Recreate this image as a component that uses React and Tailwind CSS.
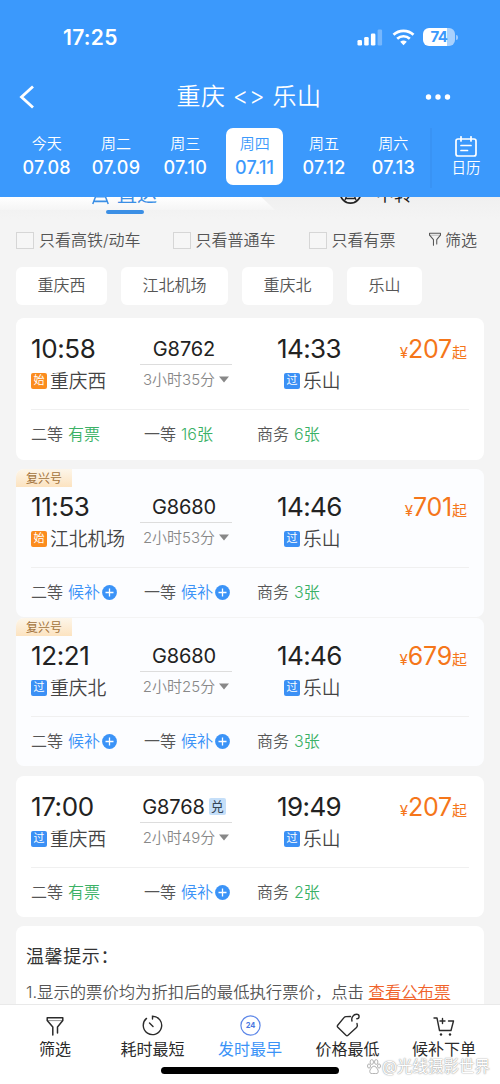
import React from 'react';

const dates = [
  ['今天', '07.08'],
  ['周二', '07.09'],
  ['周三', '07.10'],
  ['周四', '07.11'],
  ['周五', '07.12'],
  ['周六', '07.13'],
];

const trains = [
  { dep: '10:58', arr: '14:33', no: 'G8762', time: '3小时35分', from: '重庆西', kind: '始', price: '207', seats: ['有票', '16张', '6张'] },
  { dep: '11:53', arr: '14:46', no: 'G8680', time: '2小时53分', from: '江北机场', kind: '始', price: '701', seats: ['候补', '候补', '3张'], fuxing: true },
  { dep: '12:21', arr: '14:46', no: 'G8680', time: '2小时25分', from: '重庆北', kind: '过', price: '679', seats: ['候补', '候补', '3张'], fuxing: true },
  { dep: '17:00', arr: '19:49', no: 'G8768', time: '2小时49分', from: '重庆西', kind: '过', price: '207', seats: ['有票', '候补', '2张'], swap: true },
];

function Funnel({ className }) {
  return (
    <svg viewBox="0 0 20 20" className={className} fill="none" stroke="currentColor" strokeWidth="1.5" strokeLinejoin="round" strokeLinecap="round">
      <path d="M7.800 19V11L2.200 4.500V1.700H17.800V4.500L12.500 11V17" />
      <path d="M2.500 4.600H17.500" strokeWidth="0.5" />
    </svg>
  );
}

function Status() {
  return (
    <div className="flex h-[74px] items-center pl-[63px] pr-[42px] text-white">
      <span className="mt-[2px] text-[21px] leading-[24px] font-semibold tracking-[0.300px]">17:25</span>
      <div className="ml-auto flex items-center">
        <svg width="26" height="17" viewBox="0 0 26 17" fill="currentColor">
          <rect x="0.500" y="11" width="4.500" height="5.500" rx="1.300" />
          <rect x="7.200" y="8" width="4.500" height="8.500" rx="1.300" />
          <rect x="13.900" y="4.500" width="4.500" height="12" rx="1.300" />
          <rect x="20.600" y="0.500" width="4.500" height="16" rx="1.300" opacity="0.300" />
        </svg>
        <svg className="ml-[9px]" width="23" height="17" viewBox="0 0 23 17" fill="none" stroke="currentColor" strokeWidth="2.700">
          <path d="M1.500 5.800C7 .6 16 .6 21.500 5.800" />
          <path d="M5.200 9.700C8.800 6.400 14.200 6.400 17.800 9.700" />
          <path d="M8.200 12.800Q11.500 10 14.800 12.800L11.500 16.200Z" fill="currentColor" stroke="none" />
        </svg>
        <div className="ml-[8px] flex h-[18px] w-[32px] items-center justify-center rounded-[6px] bg-linear-to-r from-white from-75% to-[#a9d1fd] to-75%">
          <span className="text-[15px] leading-[18px] font-bold tracking-[-0.5px] text-[#3b99fc]">74</span>
        </div>
        <span className="ml-[1px] h-[5px] w-[2px] rounded-r-full bg-[#9dcbfd]" />
      </div>
    </div>
  );
}

function Header() {
  return (
    <header className="h-[197px] shrink-0 bg-[#3b99fc] text-white">
      <Status />
      <div className="flex h-[45px] items-center justify-between pl-[19px] pr-[49px]">
        <svg width="16" height="24" viewBox="0 0 16 24" fill="none" stroke="currentColor" strokeWidth="2.800">
          <path d="M14 1.500L2.500 12L14 22.500" />
        </svg>
        <h1 className="mt-px ml-[38px] flex h-[30px] items-center text-[24px] leading-[30px] font-[350] whitespace-nowrap tracking-[0.500px]">
          重庆 &lt;&gt; 乐山
        </h1>
        <svg width="26" height="8" viewBox="0 0 26 8" fill="currentColor">
          <circle cx="3.500" cy="4" r="2.700" />
          <circle cx="13" cy="4" r="2.700" />
          <circle cx="22.500" cy="4" r="2.700" />
        </svg>
      </div>
      <div className="flex pt-[9px]">
        <div className="ml-[12px] grid w-[416px] grid-cols-6">
          {dates.map(([day, date], i) => (
            <div key={date} className={i === 3 ? 'mx-auto h-[57px] w-[57px] rounded-[7px] bg-white text-[#3b99fc]' : 'mx-auto h-[57px] w-[57px]'}>
              <div className="h-[30px] pt-[6px] text-center text-[15px] leading-[20px] font-[350]">{day}</div>
              <div className="-mx-2 text-center text-[18px] leading-[20px] font-medium tracking-[0.250px]">{date}</div>
            </div>
          ))}
        </div>
        <div className="ml-[2px] flex h-[60px] grow flex-col items-center border-l-2 border-[#3993f4] pt-[8px]">
          <svg width="22" height="21" viewBox="0 0 22 21" fill="none" stroke="currentColor" strokeWidth="1.700" strokeLinecap="round">
            <rect x="1" y="3" width="20" height="17" rx="2" />
            <path d="M6 .8V5M16 .8V5M6 9.500H16M6 14.500H12.500" />
          </svg>
          <span className="mt-[1px] text-[14.500px] leading-[20px] font-[350]">日历</span>
        </div>
      </div>
    </header>
  );
}

function ModeTabs() {
  return (
    <div className="relative flex h-[22px] shrink-0 overflow-hidden bg-linear-to-b from-[#f0f0f0] to-[#f4f4f4]">
      <div className="h-[13px] w-[275px] bg-linear-to-b from-white to-[#f5f5f5] [clip-path:polygon(0_0,95%_0,100%_100%,0_100%)]" />
      <div className="absolute top-[-14px] left-[91px] flex items-center gap-[7px] text-[20px] leading-[24px] text-[#3b8fe5]">
        <svg width="19" height="20" viewBox="0 0 19 22" fill="none" stroke="currentColor" strokeWidth="1.700">
          <path d="M5 1H14L15 13H4ZM4 13L1 21M15 13L18 21M3 18H16M6 7H13" />
        </svg>
        <span className="h-[24px]">直达</span>
      </div>
      <div className="absolute top-[13px] left-[106px] h-[4px] w-[38px] rounded-full bg-[#3b8fe5]" />
      <div className="absolute top-[-15px] left-[338px] flex items-center gap-[13px] text-[18px] leading-[24px] text-[#222]">
        <svg width="25" height="25" viewBox="0 0 25 25" fill="none" stroke="currentColor" strokeWidth="1.700">
          <circle cx="12.500" cy="11" r="10.200" />
          <path d="M7 18L9 13H16L18 18M8 16.500H17" strokeWidth="1.300" />
        </svg>
        <span className="h-[24px]">中转</span>
      </div>
    </div>
  );
}

function Check({ label, className }) {
  return (
    <label className={className}>
      <span className="h-[17px] w-[18px] border border-[#d6d6d6] bg-[#f6f6f6]" />
      <span className="ml-[5px] h-[24px] leading-[24px]">{label}</span>
    </label>
  );
}

function Filters() {
  return (
    <div className="shrink-0 bg-[#f4f4f4] text-[#555]">
      <div className="flex h-[42px] items-center pl-[16px] text-[16px] font-[350] whitespace-nowrap">
        <Check label="只看高铁/动车" className="flex w-[156.500px] items-center" />
        <Check label="只看普通车" className="flex w-[136px] items-center" />
        <Check label="只看有票" className="flex w-[119.500px] items-center" />
        <Funnel className="mt-[-2px] h-[14px] w-[14px]" />
        <span className="ml-[3px] h-[24px] leading-[24px]">筛选</span>
      </div>
      <div className="flex h-[57px] items-start gap-[14px] pt-[6px] pl-[16px] text-[16px] leading-[37px] font-[350]">
        <span className="h-[38px] w-[91px] rounded-[6px] bg-white text-center">重庆西</span>
        <span className="h-[38px] w-[107px] rounded-[6px] bg-white text-center">江北机场</span>
        <span className="h-[38px] w-[91px] rounded-[6px] bg-white text-center">重庆北</span>
        <span className="h-[38px] w-[75px] rounded-[6px] bg-white text-center">乐山</span>
      </div>
    </div>
  );
}

function Station({ kind, name }) {
  return (
    <div className="flex h-[26px] items-center text-[18.800px] leading-[26px] font-[350] text-[#444]">
      <span className={kind === '始' ? 'mb-[2px] h-[16px] w-[16px] rounded-[2px] bg-[#fb8c1e] text-center text-[11px] leading-[15px] font-normal text-white' : 'mb-[2px] h-[16px] w-[16px] rounded-[2px] bg-[#3b90f5] text-center text-[11px] leading-[15px] font-normal text-white'}>
        {kind}
      </span>
      <span className="ml-[3px] h-[26px] whitespace-nowrap">{name}</span>
    </div>
  );
}

function Seat({ label, value }) {
  const waiting = value === '候补';
  return (
    <div className="flex w-[113px] items-center text-[16px] leading-[24px] font-[350] text-[#555]">
      <span className="h-[24px]">{label}</span>
      <span className={waiting ? 'ml-[5px] h-[24px] text-[#3b93f7]' : 'ml-[5px] h-[24px] text-[#3bb166]'}>{value}</span>
      {waiting && (
        <svg className="ml-[2px]" width="15" height="15" viewBox="0 0 15 15">
          <circle cx="7.500" cy="7.500" r="7.400" fill="#3b93f7" />
          <path d="M7.500 3.500V11.500M3.500 7.500H11.500" stroke="#fff" strokeWidth="1.300" />
        </svg>
      )}
    </div>
  );
}

function TrainCard({ train, className }) {
  return (
    <article className={className}>
      {train.fuxing && (
        <span className="absolute top-0 left-0 h-[18px] w-[56px] bg-linear-to-b from-[#fdf6ea] to-[#fce3c0] text-center text-[12px] leading-[19px] text-[#a2733c]">
          复兴号
        </span>
      )}
      <div className="flex h-[62px] pr-[1px]">
        <div className="w-[109px]">
          <div className="h-[36px] text-[26px] leading-[32px] tracking-[-0.400px] text-[#222]">{train.dep}</div>
          <Station kind={train.kind} name={train.from} />
        </div>
        <div className="w-[92px]">
          <div className="flex h-[32px] items-center justify-center border-b border-[#ddd] pr-[4px] text-[20px] leading-[30px] text-[#222]">
            <span className="tracking-[-0.100px]">{train.no}</span>
            {train.swap && (
              <span className="ml-[4px] h-[17px] w-[17px] rounded-[2px] bg-[#c5dff9] text-center text-[13px] leading-[16px] text-[#345]">兑</span>
            )}
          </div>
          <div className="flex h-[29px] items-center justify-center text-[15px] leading-[22px] font-[350] whitespace-nowrap text-[#888]">
            <span className="h-[22px]">{train.time}</span>
            <svg className="ml-[4px]" width="10" height="7" viewBox="0 0 10 7" fill="#888">
              <path d="M0 .5H10L5 6.500Z" />
            </svg>
          </div>
        </div>
        <div className="ml-[45px] w-[80px]">
          <div className="h-[36px] text-[26px] leading-[32px] tracking-[-0.600px] text-[#222]">{train.arr}</div>
          <div className="pl-[7px]">
            <Station kind="过" name="乐山" />
          </div>
        </div>
        <div className="mr-px ml-auto flex h-[32px] items-baseline text-[#f5761a]">
          <span className="text-[15px] leading-[32px]">¥</span>
          <span className="text-[25px] leading-[32px] tracking-[-0.200px]">{train.price}</span>
          <span className="text-[15px] leading-[32px]">起</span>
        </div>
      </div>
      <div className="mt-[14px] h-px bg-[#f0f0f0]" />
      <div className="mt-[12px] flex">
        <Seat label="二等" value={train.seats[0]} />
        <Seat label="一等" value={train.seats[1]} />
        <Seat label="商务" value={train.seats[2]} />
      </div>
    </article>
  );
}

function NavItem({ label, active, children }) {
  return (
    <div className={active ? 'flex flex-col items-center text-[#3b93f7]' : 'flex flex-col items-center text-[#2b2b2b]'}>
      <div className="flex h-[24px] items-center">{children}</div>
      <span className="h-[24px] text-[16px] leading-[24px] whitespace-nowrap">{label}</span>
    </div>
  );
}

function BottomNav() {
  return (
    <nav className="relative h-[80px] shrink-0 border-t border-[#e9e9e9] bg-white">
      <div className="grid grid-cols-[110px_85px_110px_85px_108px] pt-[8px]">
        <NavItem label="筛选"><Funnel className="mt-[2px] h-[20px] w-[20px]" /></NavItem>
        <NavItem label="耗时最短">
          <svg width="21" height="21" viewBox="0 0 21 21" fill="none" stroke="currentColor" strokeWidth="1.400" strokeLinecap="round">
            <path d="M10.500 4V1.200A9.200 9.200 0 1 1 4.500 3.400M7.500 8L11 11.500" />
          </svg>
        </NavItem>
        <NavItem label="发时最早" active>
          <svg width="21" height="21" viewBox="0 0 21 21" fill="none" stroke="#5d87e8">
            <circle cx="10.500" cy="10.500" r="9.600" strokeWidth="1.200" />
            <text x="10.500" y="13.200" textAnchor="middle" fontSize="7.500" fontWeight="700" fill="#4a78df" stroke="none">24</text>
          </svg>
        </NavItem>
        <NavItem label="价格最低">
          <svg width="24" height="24" viewBox="0 0 24 24" fill="none" stroke="currentColor" strokeWidth="1.400" strokeLinecap="round" strokeLinejoin="round">
            <path d="M14.500 3.500L10 3.600Q8.800 3.700 8 4.600L1.500 12.500Q1 13.300 1.800 14.200L10 22.300Q11 23.100 12 22.300L20.500 14.500Q21.500 13.500 21.300 12.500L21 10.500" />
            <path d="M16 8C15 4.500 17.500 1.200 20.500 1.200C24 1.200 23.800 5.500 20.800 5.800" />
          </svg>
        </NavItem>
        <NavItem label="候补下单">
          <svg className="mt-[2px]" width="22" height="22" viewBox="0 0 22 22" fill="none" stroke="currentColor" strokeWidth="1.400" strokeLinecap="round" strokeLinejoin="round">
            <path d="M1 3H4L6.500 15.500H18L20.500 6H15.500M9.500 3.500V8.500M7 6H12" />
            <circle cx="8" cy="19.500" r="1.200" fill="currentColor" stroke="none" />
            <circle cx="17" cy="19.500" r="1.200" fill="currentColor" stroke="none" />
          </svg>
        </NavItem>
      </div>
      <div className="absolute bottom-[10px] left-[161px] h-[7px] w-[178px] rounded-full bg-black" />
      <div className="absolute right-[10px] bottom-[6px] flex h-[22px] items-center text-[15.500px] leading-[22px] whitespace-nowrap text-white [text-shadow:0_0_1px_#888,0_0_2px_#bbb]">
        <svg className="mr-px" width="14" height="16" viewBox="0 0 14 16" fill="#fff" stroke="#aaa" strokeWidth="0.900">
          <ellipse cx="4.800" cy="3" rx="1.700" ry="2.400" />
          <ellipse cx="9.200" cy="3" rx="1.700" ry="2.400" />
          <ellipse cx="2" cy="7" rx="1.500" ry="2.100" />
          <ellipse cx="12" cy="7" rx="1.500" ry="2.100" />
          <path d="M7 7Q9 7 11 11Q12 15 8.500 14.500H5.500Q2 15 3 11Q5 7 7 7Z" />
        </svg>
        <span className="h-[22px]">@光线摄影世界</span>
      </div>
    </nav>
  );
}

export default function App() {
  return (
    <div className="flex h-[1084px] w-[500px] flex-col overflow-hidden bg-[#f4f4f4] font-[Inter,'Noto_Sans_CJK_SC',sans-serif]">
      <Header />
      <ModeTabs />
      <Filters />
      <main className="min-h-0 grow overflow-hidden px-[16px]">
        <TrainCard train={trains[0]} className="h-[142px] rounded-[8px] bg-white px-[15px] pt-[15px]" />
        <TrainCard train={trains[1]} className="relative mt-[9px] h-[148px] overflow-hidden rounded-[8px] bg-[#fcfdff] px-[15px] pt-[22px]" />
        <TrainCard train={trains[2]} className="relative mt-[1px] h-[148px] overflow-hidden rounded-[8px] bg-[#fcfdff] px-[15px] pt-[22px]" />
        <TrainCard train={trains[3]} className="mt-[10px] h-[141px] rounded-[8px] bg-white px-[15px] pt-[15px]" />
        <section className="mt-[9px] h-[90px] rounded-t-[8px] bg-white px-[10px] pt-[18px]">
          <h2 className="h-[26px] text-[18px] leading-[26px] tracking-[0.600px] text-[#333]">温馨提示：</h2>
          <p className="mt-[10px] h-[24px] text-[16.350px] leading-[24px] font-[350] whitespace-nowrap text-[#555]">
            1.显示的票价均为折扣后的最低执行票价，点击 <a className="text-[#f0622a] underline">查看公布票</a>
          </p>
        </section>
      </main>
      <BottomNav />
    </div>
  );
}
